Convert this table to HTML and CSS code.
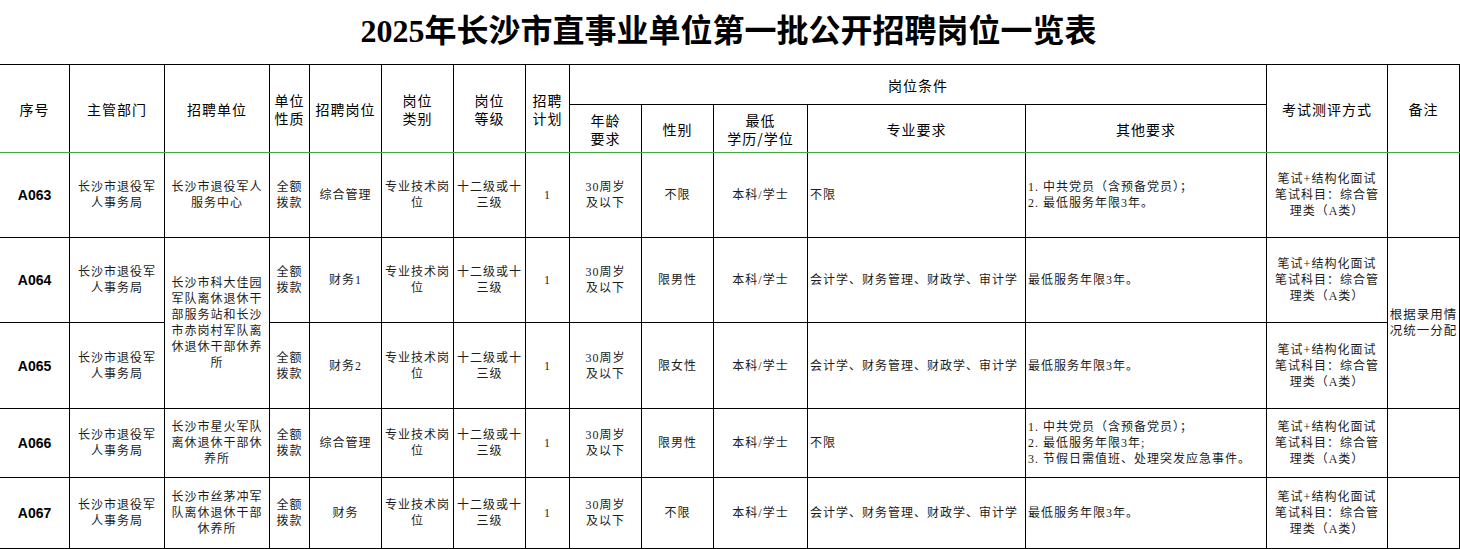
FILE: index.html
```html
<!DOCTYPE html>
<html lang="zh-CN">
<head>
<meta charset="utf-8">
<title>2025年长沙市直事业单位第一批公开招聘岗位一览表</title>
<link rel="stylesheet" href="styles.css">
</head>
<body>
<h1 class="title">2025年长沙市直事业单位第一批公开招聘岗位一览表</h1>
<table class="sheet">
  <colgroup>
    <col class="c-no"><col class="c-dept"><col class="c-unit"><col class="c-nature"><col class="c-post">
    <col class="c-type"><col class="c-grade"><col class="c-plan"><col class="c-age"><col class="c-sex">
    <col class="c-edu"><col class="c-major"><col class="c-other"><col class="c-exam"><col class="c-note">
  </colgroup>
  <thead>
    <tr class="h1">
      <th rowspan="2">序号</th>
      <th rowspan="2">主管部门</th>
      <th rowspan="2">招聘单位</th>
      <th rowspan="2">单位<br>性质</th>
      <th rowspan="2">招聘岗位</th>
      <th rowspan="2">岗位<br>类别</th>
      <th rowspan="2">岗位<br>等级</th>
      <th rowspan="2">招聘<br>计划</th>
      <th colspan="5" class="group">岗位条件</th>
      <th rowspan="2">考试测评方式</th>
      <th rowspan="2">备注</th>
    </tr>
    <tr class="h2">
      <th>年龄<br>要求</th>
      <th>性别</th>
      <th>最低<br>学历/学位</th>
      <th>专业要求</th>
      <th>其他要求</th>
    </tr>
  </thead>
  <tbody>
    <tr class="r1">
      <td class="code">A063</td>
      <td>长沙市退役军<br>人事务局</td>
      <td>长沙市退役军人<br>服务中心</td>
      <td>全额<br>拨款</td>
      <td>综合管理</td>
      <td>专业技术岗<br>位</td>
      <td>十二级或十<br>三级</td>
      <td>1</td>
      <td>30周岁<br>及以下</td>
      <td>不限</td>
      <td>本科/学士</td>
      <td class="left">不限</td>
      <td class="left">1. 中共党员（含预备党员）；<br>2. 最低服务年限3年。</td>
      <td>笔试+结构化面试<br>笔试科目：综合管<br>理类（A类）</td>
      <td></td>
    </tr>
    <tr class="r2">
      <td class="code">A064</td>
      <td>长沙市退役军<br>人事务局</td>
      <td rowspan="2">长沙市科大佳园<br>军队离休退休干<br>部服务站和长沙<br>市赤岗村军队离<br>休退休干部休养<br>所</td>
      <td>全额<br>拨款</td>
      <td>财务1</td>
      <td>专业技术岗<br>位</td>
      <td>十二级或十<br>三级</td>
      <td>1</td>
      <td>30周岁<br>及以下</td>
      <td>限男性</td>
      <td>本科/学士</td>
      <td class="left">会计学、财务管理、财政学、审计学</td>
      <td class="left">最低服务年限3年。</td>
      <td>笔试+结构化面试<br>笔试科目：综合管<br>理类（A类）</td>
      <td rowspan="2" class="note">根据录用情<br>况统一分配</td>
    </tr>
    <tr class="r3">
      <td class="code">A065</td>
      <td>长沙市退役军<br>人事务局</td>
      <td>全额<br>拨款</td>
      <td>财务2</td>
      <td>专业技术岗<br>位</td>
      <td>十二级或十<br>三级</td>
      <td>1</td>
      <td>30周岁<br>及以下</td>
      <td>限女性</td>
      <td>本科/学士</td>
      <td class="left">会计学、财务管理、财政学、审计学</td>
      <td class="left">最低服务年限3年。</td>
      <td>笔试+结构化面试<br>笔试科目：综合管<br>理类（A类）</td>
    </tr>
    <tr class="r4">
      <td class="code">A066</td>
      <td>长沙市退役军<br>人事务局</td>
      <td>长沙市星火军队<br>离休退休干部休<br>养所</td>
      <td>全额<br>拨款</td>
      <td>综合管理</td>
      <td>专业技术岗<br>位</td>
      <td>十二级或十<br>三级</td>
      <td>1</td>
      <td>30周岁<br>及以下</td>
      <td>限男性</td>
      <td>本科/学士</td>
      <td class="left">不限</td>
      <td class="left">1. 中共党员（含预备党员）；<br>2. 最低服务年限3年;<br>3. 节假日需值班、处理突发应急事件。</td>
      <td>笔试+结构化面试<br>笔试科目：综合管<br>理类（A类）</td>
      <td></td>
    </tr>
    <tr class="r5">
      <td class="code">A067</td>
      <td>长沙市退役军<br>人事务局</td>
      <td>长沙市丝茅冲军<br>队离休退休干部<br>休养所</td>
      <td>全额<br>拨款</td>
      <td>财务</td>
      <td>专业技术岗<br>位</td>
      <td>十二级或十<br>三级</td>
      <td>1</td>
      <td>30周岁<br>及以下</td>
      <td>不限</td>
      <td>本科/学士</td>
      <td class="left">会计学、财务管理、财政学、审计学</td>
      <td class="left">最低服务年限3年。</td>
      <td>笔试+结构化面试<br>笔试科目：综合管<br>理类（A类）</td>
      <td></td>
    </tr>
  </tbody>
</table>
</body>
</html>
```

FILE: styles.css
```css
html, body {
  margin: 0;
  padding: 0;
  background: #fff;
  overflow: hidden;
}
body {
  width: 1460px;
  height: 549px;
}
.title {
  margin: 0;
  height: 64px;
  line-height: 62px;
  text-align: center;
  font-family: "Liberation Serif", "Noto Sans CJK SC", serif;
  font-weight: 700;
  font-size: 32px;
  color: #000;
  padding-right: 3px;
}
.sheet {
  border-collapse: collapse;
  table-layout: fixed;
  width: 1459px;
  margin-left: -1px;
}
.sheet th, .sheet td {
  border: 1px solid #000;
  padding: 0 2px;
  text-align: center;
  vertical-align: middle;
  overflow: hidden;
}
.sheet th {
  font-family: "Noto Sans CJK SC", sans-serif;
  font-weight: 400;
  font-size: 14px;
  line-height: 18px;
  letter-spacing: 1px;
  color: #000;
}
.sheet td {
  font-family: "Liberation Serif", "Noto Sans CJK SC", serif;
  font-size: 12px;
  line-height: 16px;
  letter-spacing: 1px;
  color: #1c1c1c;
}
.sheet tr.h2 th, .sheet tr.h1 th[rowspan] {
  border-bottom-color: #3fa93f;
}
.sheet td.left {
  text-align: left;
  padding-left: 2px;
}
.sheet td.code {
  font-family: "Liberation Sans", "DejaVu Sans", sans-serif;
  font-weight: 700;
  font-size: 14px;
  letter-spacing: 0;
  color: #000;
}
.sheet td.note {
  font-size: 12.5px;
  padding: 0 1px;
}
.c-no { width: 70px; }
.c-dept { width: 95px; }
.c-unit { width: 105px; }
.c-nature { width: 40px; }
.c-post { width: 72px; }
.c-type { width: 72px; }
.c-grade { width: 72px; }
.c-plan { width: 44px; }
.c-age { width: 72px; }
.c-sex { width: 72px; }
.c-edu { width: 94px; }
.c-major { width: 218px; }
.c-other { width: 241px; }
.c-exam { width: 121px; }
.c-note { width: 72px; }
tr.h1 { height: 40px; }
tr.h2 { height: 48px; }
tr.r1 { height: 85px; }
tr.r2 { height: 85px; }
tr.r3 { height: 86px; }
tr.r4 { height: 69px; }
tr.r5 { height: 71px; }
```
